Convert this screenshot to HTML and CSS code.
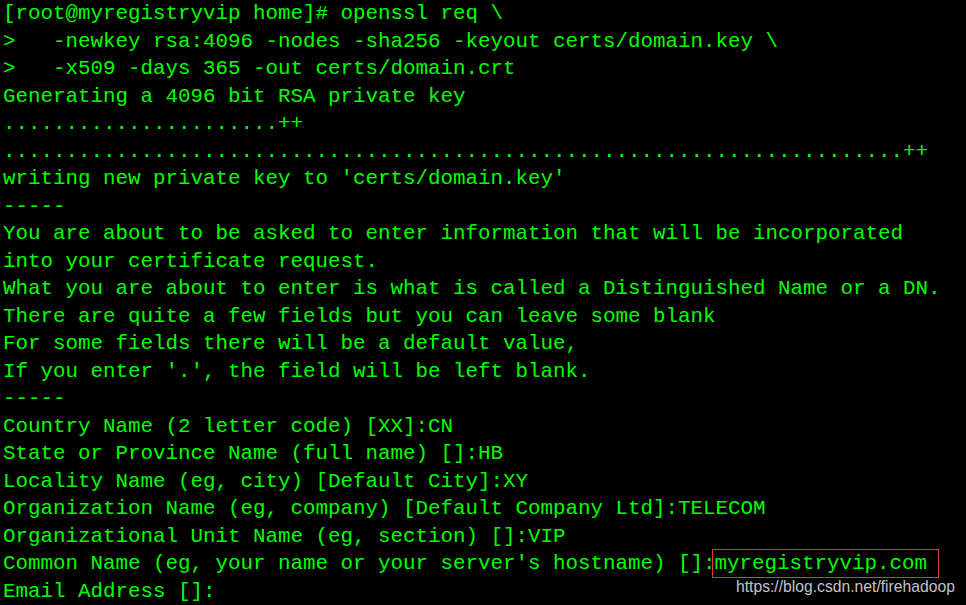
FILE: index.html
```html
<!DOCTYPE html>
<html>
<head>
<meta charset="utf-8">
<link rel="stylesheet" href="styles.css">
</head>
<body>
<div class="term">
<pre class="out">[root@myregistryvip home]# openssl req \
&gt;   -newkey rsa:4096 -nodes -sha256 -keyout certs/domain.key \
&gt;   -x509 -days 365 -out certs/domain.crt
Generating a 4096 bit RSA private key
......................++
........................................................................++
writing new private key to 'certs/domain.key'
-----
You are about to be asked to enter information that will be incorporated
into your certificate request.
What you are about to enter is what is called a Distinguished Name or a DN.
There are quite a few fields but you can leave some blank
For some fields there will be a default value,
If you enter '.', the field will be left blank.
-----
Country Name (2 letter code) [XX]:CN
State or Province Name (full name) []:HB
Locality Name (eg, city) [Default City]:XY
Organization Name (eg, company) [Default Company Ltd]:TELECOM
Organizational Unit Name (eg, section) []:VIP
Common Name (eg, your name or your server's hostname) []:<span class="mark">myregistryvip.com</span>
Email Address []:</pre>
<div class="watermark">https://blog.csdn.net/firehadoop</div>
</div>
</body>
</html>
```
FILE: styles.css
```css
html, body {
  margin: 0;
  padding: 0;
  background: #000;
  width: 966px;
  height: 605px;
  overflow: hidden;
}
.term {
  position: relative;
  width: 966px;
  height: 605px;
  background: #000;
}
.out {
  margin: 0;
  padding: 0 0 0 3px;
  font-family: "Liberation Mono", monospace;
  font-size: 20.83px;
  line-height: 27.5px;
  color: #00ff00;
  white-space: pre;
}
.mark {
  display: inline-block;
  height: 29px;
  line-height: 27.5px;
  box-sizing: border-box;
  border: 1px solid #e53935;
  padding: 0 11px 0 1px;
  margin-left: -3px;
  margin-top: -1px;
  margin-bottom: -1px;
  vertical-align: top;
}
.watermark {
  position: absolute;
  left: 736px;
  top: 578px;
  font-family: "Liberation Sans", Arial, sans-serif;
  font-size: 15.7px;
  line-height: 17px;
  color: #c4c4c4;
}
```
